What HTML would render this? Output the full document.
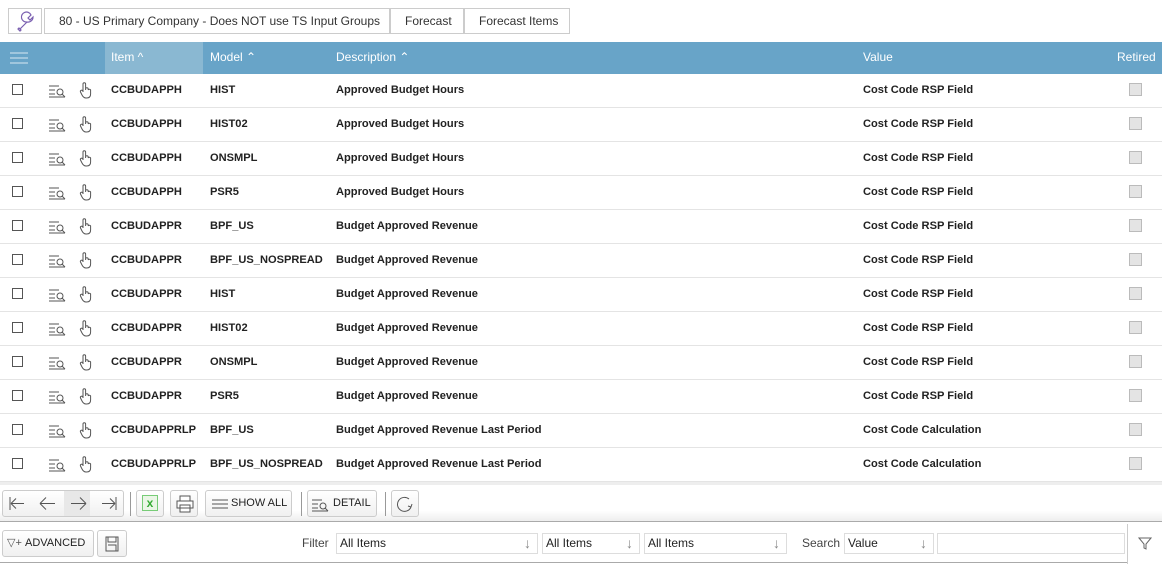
<!DOCTYPE html>
<html><head><style>
*{box-sizing:border-box;margin:0;padding:0}
body{width:1162px;height:564px;overflow:hidden;background:#fff;font-family:"Liberation Sans",sans-serif;position:relative;color:#222}
.abs{position:absolute}
.bc{position:absolute;top:8px;height:26px;border:1px solid #ccc;background:#fff;font-size:12px;color:#333;line-height:24px;padding-left:14px;white-space:nowrap;overflow:hidden}
.hdr{position:absolute;left:0;top:42px;width:1162px;height:32px;background:#68a4c8;color:#fff;font-size:12px}
.hdr span{position:absolute;top:8px}
.row{position:absolute;left:0;width:1162px;height:34px;border-bottom:1px solid #e4e4e4;font-size:11.1px;font-weight:bold;color:#222;white-space:nowrap}
.row span{position:absolute;top:10px}
.cb{position:absolute;left:12px;top:10px;width:11px;height:11px;border:1px solid #555}
.rt{position:absolute;left:1129px;top:9px;width:13px;height:13px;border:1px solid #bbb;background:#e4e4e4}
.btn{position:absolute;height:27px;border:1px solid #ccc;border-radius:3px;background:linear-gradient(#fff,#f0f0f0);font-size:11px;color:#222;line-height:25px;white-space:nowrap}
.sel{position:absolute;top:533px;height:21px;border:1px solid #ddd;font-size:12px;line-height:18px;padding-left:3px;color:#222}
.sel i{position:absolute;right:6px;top:0;font-style:normal;color:#888;font-size:14px}
</style></head><body>
<div class="abs" style="left:8px;top:8px;width:34px;height:26px;border:1px solid #ccc">
<svg width="34" height="26"><path d="M11 20 L18 13 M18 13 a5 5 0 1 1 4 -7 l-3 3 l2 2 l3 -3 a5 5 0 0 1 -6 5 M10 19 l2 2 -1 1 -2 -2z" stroke="#7a5fb0" fill="none" stroke-width="1.2"/></svg></div>
<div class="bc" style="left:44px;width:346px">80 - US Primary Company - Does NOT use TS Input Groups</div>
<div class="bc" style="left:390px;width:74px">Forecast</div>
<div class="bc" style="left:464px;width:106px">Forecast Items</div>
<div class="hdr">
<div class="abs" style="left:105px;top:0;width:98px;height:32px;background:#8ab8d2"></div>
<svg class="abs" style="left:10px;top:10px" width="18" height="12"><path d="M0 1h18M0 6h18M0 11h18" stroke="#d8e8f2" stroke-width="1"/></svg>
<span style="left:111px">Item ^</span><span style="left:210px">Model ⌃</span><span style="left:336px">Description ⌃</span><span style="left:863px">Value</span><span style="left:1117px">Retired</span>
</div>
<div id="rows"></div>
<script>
var d=[["CCBUDAPPH","HIST","Approved Budget Hours","Cost Code RSP Field"],["CCBUDAPPH","HIST02","Approved Budget Hours","Cost Code RSP Field"],["CCBUDAPPH","ONSMPL","Approved Budget Hours","Cost Code RSP Field"],["CCBUDAPPH","PSR5","Approved Budget Hours","Cost Code RSP Field"],["CCBUDAPPR","BPF_US","Budget Approved Revenue","Cost Code RSP Field"],["CCBUDAPPR","BPF_US_NOSPREAD","Budget Approved Revenue","Cost Code RSP Field"],["CCBUDAPPR","HIST","Budget Approved Revenue","Cost Code RSP Field"],["CCBUDAPPR","HIST02","Budget Approved Revenue","Cost Code RSP Field"],["CCBUDAPPR","ONSMPL","Budget Approved Revenue","Cost Code RSP Field"],["CCBUDAPPR","PSR5","Budget Approved Revenue","Cost Code RSP Field"],["CCBUDAPPRLP","BPF_US","Budget Approved Revenue Last Period","Cost Code Calculation"],["CCBUDAPPRLP","BPF_US_NOSPREAD","Budget Approved Revenue Last Period","Cost Code Calculation"]];
var h="";d.forEach(function(r,i){h+='<div class="row" style="top:'+(74+i*34)+'px"><div class="cb"></div><svg class="abs" style="left:49px;top:10px" width="18" height="14"><path d="M0 2h10M0 6h6M0 10h6M0 13h16" stroke="#555" fill="none"/><circle cx="11" cy="8" r="3" stroke="#555" fill="none"/><path d="M13 10l3 3" stroke="#555"/></svg><svg class="abs" style="left:79px;top:7px" width="14" height="18"><path d="M4 11V3a1.3 1.3 0 0 1 2.6 0v6M6.6 8a1.3 1.3 0 0 1 2.6 0v1M9.2 9a1.3 1.3 0 0 1 2.4 0v4c0 3-2 4-4 4H7c-2 0-3-1-4-3L1.5 11a1.2 1.2 0 0 1 2.3-1" stroke="#555" fill="none"/></svg><span style="left:111px">'+r[0]+'</span><span style="left:210px">'+r[1]+'</span><span style="left:336px">'+r[2]+'</span><span style="left:863px">'+r[3]+'</span><div class="rt"></div></div>'});document.getElementById("rows").innerHTML=h;
</script>
<div class="abs" style="left:0;top:482px;width:1162px;height:3px;background:#eee"></div>
<div class="abs" style="left:0;top:486px;width:1162px;height:36px;background:linear-gradient(#fff 70%,#eee);border-bottom:1px solid #aaa"></div>
<div class="btn" style="left:2px;top:490px;width:122px;font-size:16px;color:#555;line-height:24px">
<div class="abs" style="left:61px;top:0;width:26px;height:25px;background:#e8e8e8"></div>
<svg class="abs" style="left:0;top:0" width="120" height="25"><g stroke="#555" fill="none"><path d="M7 6v13M8 12.5h13M8 12.5l5-5M8 12.5l5 5"/><path d="M37 12.5h15M37 12.5l6-6M37 12.5l6 6"/><path d="M68 12.5h15M83 12.5l-6-6M83 12.5l-6 6"/><path d="M113 6v13M99 12.5h13M112 12.5l-5-5M112 12.5l-5 5"/></g></svg></div>
<div class="abs" style="left:130px;top:492px;width:1px;height:24px;background:#999"></div>
<div class="btn" style="left:136px;top:490px;width:28px"><div class="abs" style="left:5px;top:4px;width:16px;height:16px;border:1px solid #7c7;background:#eaf6e6;color:#3a3;font-weight:bold;font-size:12px;line-height:14px;text-align:center">x</div></div>
<div class="btn" style="left:170px;top:490px;width:28px"><svg class="abs" style="left:5px;top:4px" width="18" height="18"><path d="M4 6V1h10v5M1 6h16v7H1zM4 10h10v7H4z" stroke="#555" fill="#fff"/></svg></div>
<div class="btn" style="left:205px;top:490px;width:87px;padding-left:25px">SHOW ALL<svg class="abs" style="left:6px;top:8px" width="16" height="10"><path d="M0 1h16M0 5h16M0 9h16" stroke="#555"/></svg></div>
<div class="abs" style="left:301px;top:492px;width:1px;height:24px;background:#999"></div>
<div class="btn" style="left:307px;top:490px;width:70px;padding-left:25px">DETAIL<svg class="abs" style="left:4px;top:7px" width="18" height="14"><path d="M0 2h10M0 6h6M0 10h6M0 13h16" stroke="#555" fill="none"/><circle cx="11" cy="8" r="3" stroke="#555" fill="none"/><path d="M13 10l3 3" stroke="#555"/></svg></div>
<div class="abs" style="left:385px;top:492px;width:1px;height:24px;background:#999"></div>
<div class="btn" style="left:391px;top:490px;width:28px"><svg class="abs" style="left:4px;top:4px" width="18" height="18"><path d="M15 12A7 7 0 1 1 13 4" stroke="#555" fill="none"/><path d="M15 12l-3-1M15 12l1-3" stroke="#555"/></svg></div>
<div class="abs" style="left:0;top:524px;width:1128px;height:39px;border-bottom:1px solid #aaa"></div>
<div class="abs" style="left:1127px;top:524px;width:1px;height:40px;background:#ccc"></div>
<div class="btn" style="left:2px;top:530px;width:92px;padding-left:22px;font-size:11px">ADVANCED<span class="abs" style="left:4px;top:0;color:#555">▽+</span></div>
<div class="btn" style="left:97px;top:530px;width:30px"><svg class="abs" style="left:7px;top:5px" width="14" height="16"><path d="M1 1h12v14H1zM3 1v5h8V1M3 9h8v6" stroke="#555" fill="none"/></svg></div>
<div class="abs" style="left:302px;top:536px;font-size:12px;color:#444">Filter</div>
<div class="sel" style="left:336px;width:202px">All Items<i>↓</i></div>
<div class="sel" style="left:542px;width:98px">All Items<i>↓</i></div>
<div class="sel" style="left:644px;width:143px">All Items<i>↓</i></div>
<div class="abs" style="left:802px;top:536px;font-size:12px;color:#444">Search</div>
<div class="sel" style="left:844px;width:90px">Value<i>↓</i></div>
<div class="sel" style="left:937px;width:188px"></div>
<svg class="abs" style="left:1138px;top:537px" width="14" height="13"><path d="M1 1h12L8 7v5L6 11V7z" stroke="#666" fill="none"/></svg>
</body></html>
